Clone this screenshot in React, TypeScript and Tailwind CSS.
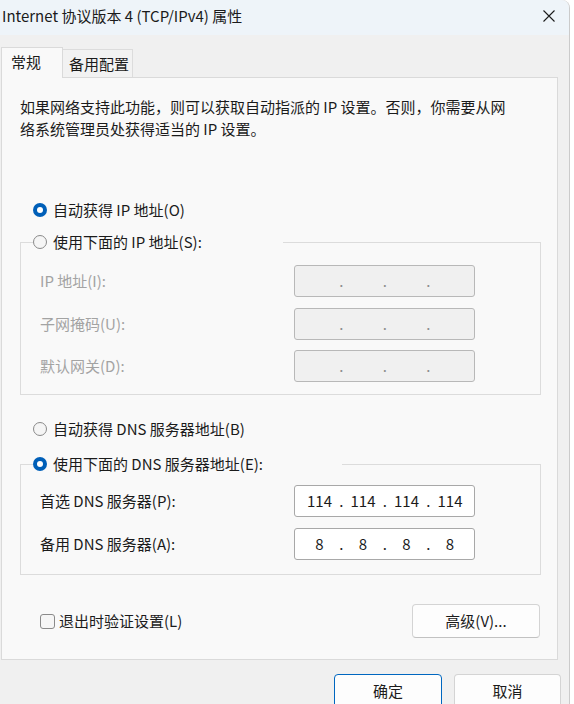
import { Fragment } from "react";

function Radio({ checked, label }: { checked?: boolean; label: string }) {
  return (
    <span className="flex h-[22px] items-center gap-[6px]">
      {checked ? (
        <span className="flex h-[14px] w-[14px] items-center justify-center rounded-full bg-[#005fb8]">
          <span className="h-[6px] w-[6px] rounded-full bg-white" />
        </span>
      ) : (
        <span className="h-[14px] w-[14px] rounded-full border border-[#8a8a8a] bg-[#f5f5f5]" />
      )}
      <span className="whitespace-nowrap">{label}</span>
    </span>
  );
}

function IpBox({ values, disabled }: { values: string[]; disabled?: boolean }) {
  return (
    <div
      className={`flex h-[32px] w-[181px] items-center rounded-[3px] border pl-[7px] ${
        disabled
          ? "border-[#b8b8b8] bg-[#f0f0f0] text-[#8c8c8c]"
          : "border-[#a8a8a8] bg-white text-[#1b1b1b]"
      }`}
    >
      {values.map((v, i) => (
        <Fragment key={i}>
          {i > 0 && <span className="w-[8.5px] text-center">.</span>}
          <span className="w-[35px] text-center">{v}</span>
        </Fragment>
      ))}
    </div>
  );
}

function FieldRow({ label, values, disabled }: { label: string; values: string[]; disabled?: boolean }) {
  return (
    <div className="flex h-[32px] items-center">
      <span className={`w-[254px] ${disabled ? "text-[#a3a3a3]" : ""}`}>{label}</span>
      <IpBox values={values} disabled={disabled} />
    </div>
  );
}

const empty = ["", "", "", ""];

export default function App() {
  return (
    <div className="h-[704px] w-[574px] overflow-hidden bg-white font-['Noto_Sans_CJK_SC',sans-serif] text-[15px] leading-[22px] text-[#1b1b1b]">
      <div className="flex h-full w-[570px] flex-col rounded-tr-[8px] border-r border-[#cbcbcb] bg-[#f0f0f0]">
        {/* Title bar */}
        <div className="flex h-[35px] shrink-0 items-center justify-between rounded-tr-[8px] bg-[#eef4f9] pb-[3px] pl-[2px] pr-[14px]">
          <span>Internet 协议版本 4 (TCP/IPv4) 属性</span>
          <svg width="12" height="12" viewBox="0 0 12 12" className="text-[#1b1b1b]">
            <path d="M0.5 0.5L11.5 11.5M11.5 0.5L0.5 11.5" stroke="currentColor" strokeWidth="1.1" />
          </svg>
        </div>

        {/* Tabs */}
        <div className="flex items-end pl-[1px] pt-[12px]">
          <div className="relative z-10 -mb-px h-[31px] w-[62px] border-l border-r border-t border-[#dadada] bg-[#f9f9f9] pl-[9px] pt-[3px]">
            常规
          </div>
          <div className="h-[28px] w-[70px] border-r border-t border-[#dcdcdc] bg-[#f2f2f2] pl-[6px] pt-[3px]">
            备用配置
          </div>
        </div>

        {/* Panel */}
        <div className="ml-[1px] flex w-[557px] flex-col border border-[#dadada] bg-[#f9f9f9] pb-[21px] pt-[18px]">
          <p className="pl-[18px]">
            如果网络支持此功能，则可以获取自动指派的 IP 设置。否则，你需要从网
            <br />
            络系统管理员处获得适当的 IP 设置。
          </p>

          <div className="ml-[31px] mt-[59px]">
            <Radio checked label="自动获得 IP 地址(O)" />
          </div>

          <fieldset className="ml-[18px] mt-[10px] w-[521px] border border-[#dcdcdc] px-[12px] pb-[12px] pt-[12px]">
            <legend className="w-[250px]">
              <Radio label="使用下面的 IP 地址(S):" />
            </legend>
            <div className="flex flex-col gap-[10.5px] pl-[7px]">
              <FieldRow label="IP 地址(I):" values={empty} disabled />
              <FieldRow label="子网掩码(U):" values={empty} disabled />
              <FieldRow label="默认网关(D):" values={empty} disabled />
            </div>
          </fieldset>

          <div className="ml-[31px] mt-[23px]">
            <Radio label="自动获得 DNS 服务器地址(B)" />
          </div>

          <fieldset className="ml-[18px] mt-[13px] w-[521px] border border-[#dcdcdc] px-[12px] pb-[14px] pt-[10px]">
            <legend className="w-[309px]">
              <Radio checked label="使用下面的 DNS 服务器地址(E):" />
            </legend>
            <div className="flex flex-col gap-[11px] pl-[7px]">
              <FieldRow label="首选 DNS 服务器(P):" values={["114", "114", "114", "114"]} />
              <FieldRow label="备用 DNS 服务器(A):" values={["8", "8", "8", "8"]} />
            </div>
          </fieldset>

          <div className="mt-[29px] flex items-center justify-between pl-[38px] pr-[17px]">
            <label className="flex items-center gap-[4px]">
              <span className="h-[15px] w-[15px] rounded-[3px] border border-[#8a8a8a] bg-[#f6f6f6]" />
              <span>退出时验证设置(L)</span>
            </label>
            <button className="h-[34px] w-[128px] rounded-[4px] border border-[#d4d4d4] border-b-[#c2c2c2] bg-[#fdfdfd]">
              高级(V)...
            </button>
          </div>
        </div>

        {/* Dialog buttons */}
        <div className="mt-[14px] flex justify-end gap-[12px] pr-[8px]">
          <button className="h-[34px] w-[108px] rounded-[4px] border border-[#0067c0] bg-[#fdfdfd]">确定</button>
          <button className="h-[34px] w-[107px] rounded-[4px] border border-[#d4d4d4] border-b-[#c2c2c2] bg-[#fdfdfd]">
            取消
          </button>
        </div>
      </div>
    </div>
  );
}
